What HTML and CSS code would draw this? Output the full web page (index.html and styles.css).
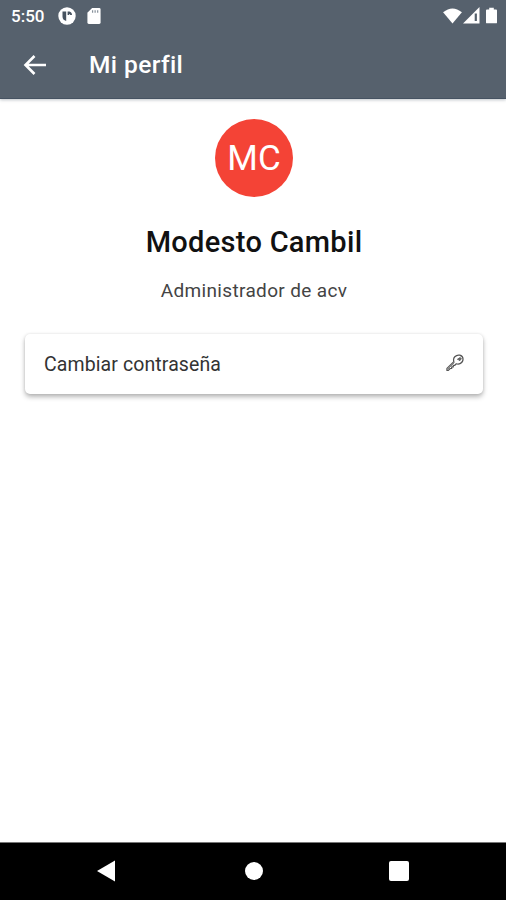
FILE: index.html
```html
<!DOCTYPE html>
<html lang="es">
<head>
<meta charset="utf-8">
<title>Mi perfil</title>
<link rel="stylesheet" href="styles.css">
</head>
<body>
<div class="screen">
  <header class="top">
    <div class="status">
      <span class="time">5:50</span>
      <svg class="app-icon" width="18" height="18" viewBox="0 0 18 18"><circle cx="9" cy="9" r="8.700" fill="#fff"/><path d="M4.500 4.500h3.700v9.500Q4.500 13 4.500 9.500zM9.600 4.500h1.800q2.600.5 2.600 3.500h-1.800q0-1-1-1v1h-1.600z" fill="#46525f"/></svg>
      <svg class="sd-icon" width="14" height="16" viewBox="0 0 14 17"><path d="M5 0h7.500Q14 0 14 1.500v14q0 1.500-1.500 1.500h-11Q0 17 0 15.500V5z" fill="#fff"/><path d="M5.500 2.500v2.500M8.200 2.500v2.500M10.900 2.500v2.500" stroke="#88929c" stroke-width="1.300"/></svg>
      <span class="spacer"></span>
      <svg class="wifi" width="19" height="16" viewBox="0 0 20 17"><path d="M0 4.500Q10-3.700 20 4.500L10 16.500z" fill="#fff"/></svg>
      <svg class="signal" width="17" height="17" viewBox="0 0 17 17"><path d="M0 16.500L16.500 0v16.500z" fill="#fff"/><path d="M12.800 6.500v7.500" stroke="#56616d" stroke-width="2.200"/></svg>
      <svg class="battery" width="11" height="17" viewBox="0 0 12 17"><path d="M3.500 0h5v2H11q1 0 1 1v13q0 1-1 1H1q-1 0-1-1V3q0-1 1-1h2.500z" fill="#fff"/></svg>
    </div>
    <div class="toolbar">
      <svg class="back" width="24" height="22" viewBox="0 0 24 22"><path d="M11.500 2L2.500 11l9 9M2.800 11H23" fill="none" stroke="#fff" stroke-width="2.600"/></svg>
      <h1 class="title">Mi perfil</h1>
    </div>
  </header>
  <main class="profile">
    <div class="avatar">MC</div>
    <h2 class="name">Modesto Cambil</h2>
    <p class="role">Administrador de acv</p>
    <div class="card">
      <span class="card-label">Cambiar contraseña</span>
      <svg class="key" width="18" height="18" viewBox="0 0 19 19"><g fill="none" stroke="#555" stroke-width="1.300" stroke-linejoin="round"><path d="M1 15.200L8.300 8Q7.300 5 9.300 2.900Q11.500.6 14.500 1.200Q17.800 2 18 5.200Q18 8.500 15.300 9.900Q13.200 11 10.900 10.300L9.300 11.900H7.700V13.600H6V15.300H4.400L2.500 17.300H1z"/><path d="M2 15.900L9 8.900" stroke-width=".8"/><path d="M12 5.600l3-2 1.300 1.400-2 2.300q0-1.500-2.300-1.700z" fill="#666" stroke-width=".8"/></g></svg>
    </div>
  </main>
  <nav class="navbar">
    <svg width="18" height="22" viewBox="0 0 18 22"><path d="M0 11L18 .5v21z" fill="#fff"/></svg>
    <span class="home"></span>
    <span class="recent"></span>
  </nav>
</div>
</body>
</html>
```
FILE: styles.css
```css
body {
  margin: 0;
  font-family: Roboto, sans-serif;
}
.screen {
  display: flex;
  flex-direction: column;
  width: 506px;
  height: 900px;
  overflow: hidden;
  background: #fff;
}
.top {
  height: 99px;
  box-sizing: border-box;
  background: #56616d;
  color: #fff;
  border-bottom: 1px solid #465362;
  box-shadow: 0 1px 3px rgba(70, 83, 98, .35);
}
.status {
  display: flex;
  align-items: center;
  height: 31px;
  padding: 0 9px 0 11px;
}
.time {
  width: 47px;
  font-size: 17px;
  font-weight: 500;
  line-height: 32px;
}
.sd-icon { margin-left: 11px; }
.spacer { flex: 1; }
.signal { margin-left: 1px; }
.battery { margin-left: 6px; }
.toolbar {
  display: flex;
  align-items: center;
  height: 67px;
  padding-left: 23px;
}
.title {
  margin: 0 0 0 42px;
  font-size: 24.5px;
  font-weight: 500;
  line-height: 30px;
  letter-spacing: .4px;
}
.profile {
  flex: 1;
  display: flex;
  flex-direction: column;
  align-items: center;
  padding: 20px 23px 0 25px;
}
.avatar {
  width: 78px;
  height: 78px;
  border-radius: 50%;
  background: #f44336;
  color: #fff;
  font-size: 35px;
  line-height: 80px;
  text-align: center;
}
.name {
  margin: 27px 0 0;
  font-size: 29px;
  font-weight: 500;
  line-height: 36px;
  letter-spacing: .3px;
  color: #111;
}
.role {
  margin: 19px 0 0;
  font-size: 19px;
  line-height: 24px;
  letter-spacing: .35px;
  color: #444;
}
.card {
  display: flex;
  align-items: center;
  justify-content: space-between;
  align-self: stretch;
  height: 60px;
  margin-top: 31px;
  padding: 0 19px;
  box-sizing: border-box;
  border-radius: 5px;
  background: #fff;
  box-shadow: 0 3px 5px rgba(0, 0, 0, .28), 0 0 3px rgba(0, 0, 0, .1);
}
.card-label {
  padding-top: 2px;
  font-size: 19.5px;
  line-height: 24px;
  letter-spacing: .1px;
  color: #333;
}
.key {
  margin-bottom: 2px;
}
.navbar {
  display: flex;
  align-items: center;
  height: 58px;
  box-sizing: border-box;
  padding: 0 0 2px 97px;
  background: #000;
  border-top: 1px solid #777;
}
.home {
  width: 18px;
  height: 18px;
  margin-left: 130px;
  border-radius: 50%;
  background: #fff;
}
.recent {
  width: 20px;
  height: 20px;
  margin-left: 126px;
  border-radius: 2px;
  background: #fff;
}
```
